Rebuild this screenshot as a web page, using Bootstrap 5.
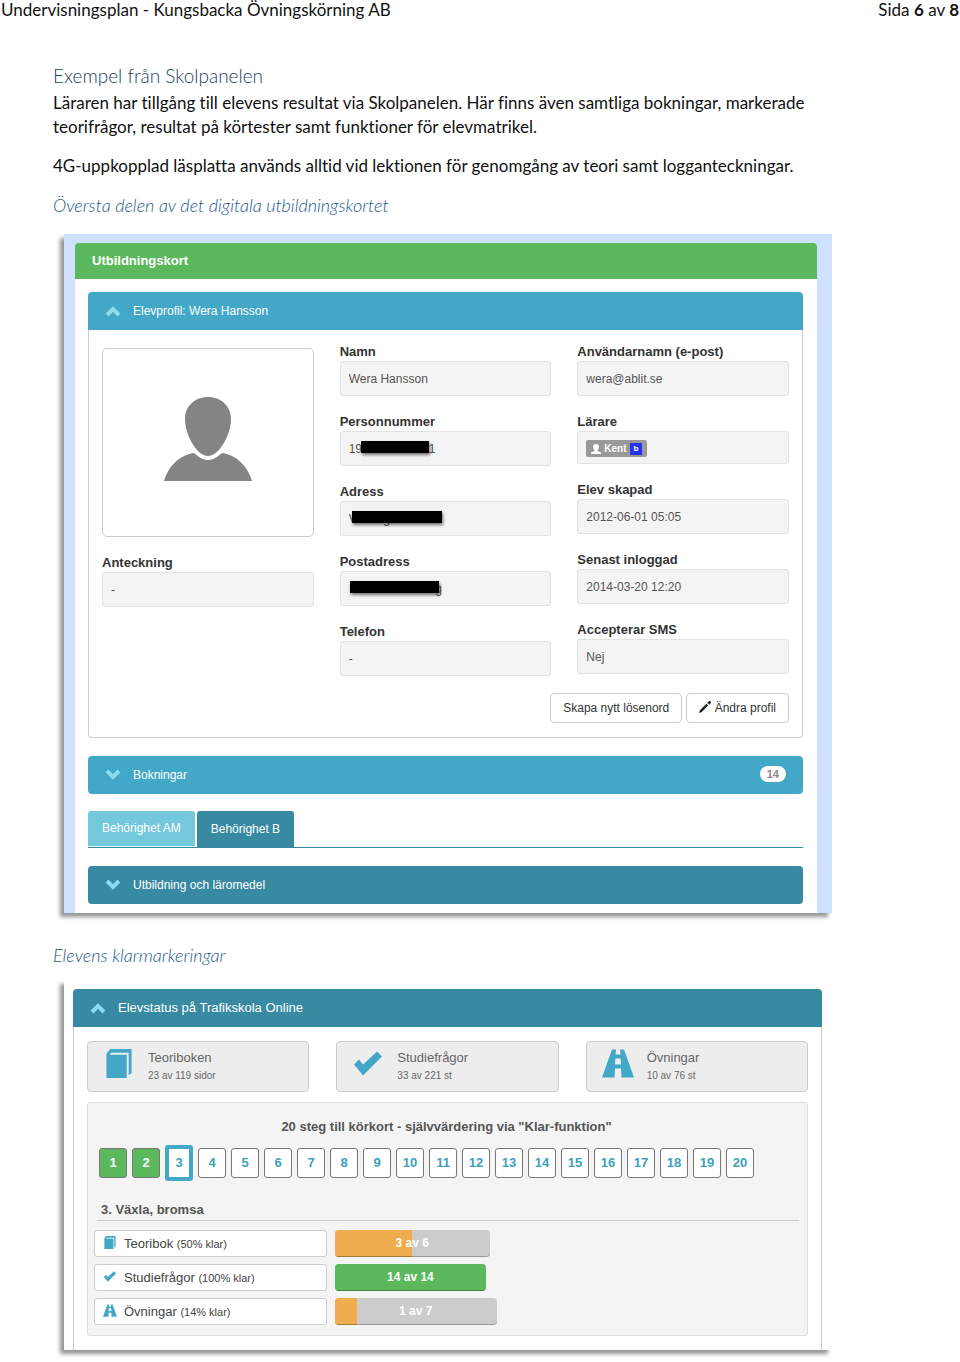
<!DOCTYPE html>
<html lang="sv">
<head>
<meta charset="utf-8">
<meta name="viewport" content="width=device-width, initial-scale=1">
<title>Undervisningsplan - Kungsbacka Övningskörning AB</title>
<link href="https://cdn.jsdelivr.net/npm/bootstrap@5.3.0/dist/css/bootstrap.min.css" rel="stylesheet">
<style>
  :root { --teal: #43a8c8; --petrol: #388aa2; --leaf: #5cb85c; --amber: #f0ad4e; --hint: #8adcf0; }
  body { font-family: Lato, sans-serif; font-size: 17px; line-height: 24px; font-variant-ligatures: none; color: #111; background: #fff; }
  .page-head { line-height: 20px; padding: 0 1px; }
  .page-body { padding: 44px 128px 12px 53px; }
  .doc-title { font-size: 19px; line-height: 24px; font-weight: 300; color: #24415f; margin-bottom: 3px; }
  .doc-text { margin-bottom: 15px; margin-right: -20px; }
  .doc-caption { font-style: italic; font-size: 18px; line-height: 24px; font-weight: 300; color: #245a8c; margin: 0; }
  .shot { margin: 17px 0 0 11px; font-family: "Liberation Sans", Arial, sans-serif; font-size: 12px; line-height: 18px; color: #555; box-shadow: -4px 4px 4px rgba(0,0,0,.42); background: #fff; }
  .shot + .doc-caption { margin-top: 30px; }
  .shot-blue { background: #cfe1ff; padding: 9px 15px 0 11px; }
  .shot-status { margin-top: 13px; padding: 9px 10px 0 9px; }
  .card-title-bar { background: var(--leaf); color: #fff; font-size: 13px; font-weight: 700; line-height: 18px; padding: 9px 17px; border-radius: 4px 4px 0 0; margin: 0; }
  .sheet { background: #fff; padding: 13px 14px 9px 13px; }
  .bar-btn { display: flex; align-items: center; width: 100%; border: 0; border-radius: 4px; background: var(--teal); color: #fff; line-height: 18px; padding: 10px 17px; text-align: left; }
  .bar-btn svg { width: 16px; height: 12px; fill: none; stroke: var(--hint); stroke-width: 4; margin-right: 12px; }
  .bar-btn.dark { background: var(--petrol); }
  .bar-btn.open { border-radius: 4px 4px 0 0; }
  .shot-status .bar-btn { font-size: 13px; }
  .count { background: #fff; color: #888; font-size: 11px; font-weight: 700; line-height: 16px; border-radius: 8px; padding: 0 7px; margin-bottom: 2px; }
  .profile { border: 1px solid #ccc; border-top: 0; border-radius: 0 0 4px 4px; padding: 13px 13px 14px; margin-bottom: 18px; }
  .profile .row { --bs-gutter-x: 26px; }
  .avatar { border: 1px solid #ccc; border-radius: 5px; height: 189px; margin: 5px 0 17px; }
  .avatar svg { width: 88px; height: 84px; margin-bottom: 8px; fill: #848484; }
  .field { margin-bottom: 17px; position: relative; }
  .field label, .field .lbl { display: block; font-size: 13px; font-weight: 700; line-height: 18px; color: #333; }
  .field .form-control { height: 35px; font-size: 12px; line-height: 18px; padding: 7px 8px; border: 1px solid #e3e3e3; border-radius: 3px; background: #f4f4f4; color: #555; white-space: pre; box-shadow: none; }
  .field .short { height: 33px; }
  .hide-bar { position: absolute; background: #000; height: 12px; top: 28px; box-shadow: 1px 2px 3px rgba(0,0,0,.55); }
  .teacher { display: inline-flex; align-items: center; gap: 3px; background: #999; color: #fff; font-size: 10px; font-weight: 700; line-height: 17px; border-radius: 2px; padding: 0 5px; margin-top: 1px; }
  .teacher svg { width: 10px; height: 10px; fill: #fff; }
  .teacher b { background: #2632ee; font-size: 8px; line-height: 12px; padding: 0 4px; }
  .tool { background: #fff; border: 1px solid #ccc; border-radius: 4px; color: #333; font-size: 12px; line-height: 18px; padding: 5px 12px; white-space: nowrap; }
  .tool svg { width: 12px; height: 12px; fill: #222; vertical-align: -1px; }
  .cls-tabs { border-bottom: 1px solid var(--petrol); gap: 2px; margin: 17px 0 18px; }
  .cls-tabs button { border: 0; border-radius: 3px 3px 0 0; color: #fff; background: #74c8dc; line-height: 18px; padding: 8px 14px 9px; margin-bottom: 1px; }
  .cls-tabs .active { background: var(--petrol); margin-bottom: 0; padding: 9px 14px; }
  .status { border: 1px solid #ccc; border-top: 0; border-bottom: 0; padding: 14px 13px; }
  .tiles { gap: 27px; margin-bottom: 10px; }
  .tile { flex: 1 1 0; height: 51px; border: 1px solid #ccc; border-radius: 4px; background: #ededed; padding: 7px 15px; display: flex; gap: 13px; color: #666; }
  .tile svg { width: 32px; height: 29px; flex: none; }
  .tile strong { display: block; font-size: 13px; font-weight: 400; line-height: 18px; }
  .tile span { display: block; font-size: 10px; line-height: 18px; }
  .ico { fill: #43a8c8; }
  .well-box { background: #f4f4f4; border: 1px solid #ddd; border-radius: 3px; padding: 14px 8px 10px 6px; }
  .well-title { font-size: 13px; font-weight: 700; line-height: 20px; text-align: center; color: #555; margin: 0 0 11px; }
  .steps { gap: 5px; padding-left: 5px; }
  .steps button { width: 28px; height: 30px; border: 1px solid #777; border-radius: 3px; background: #fff; color: #3e9fbd; font-size: 13px; font-weight: 700; line-height: 18px; padding: 0; }
  .steps .done { background: var(--leaf); color: #fff; }
  .steps .now { border: 4px solid var(--teal); height: 36px; margin: -3px 0; }
  .part-title { font-size: 13px; font-weight: 700; line-height: 18px; color: #555; border-bottom: 1px solid #ccc; padding: 0 4px 1px; margin: 23px 0 9px 3px; }
  .task { gap: 8px; margin-bottom: 7px; }
  .task:last-child { margin-bottom: 0; }
  .task a { width: 33%; height: 27px; border: 1px solid #ccc; border-radius: 3px; background: #fff; color: #444; font-size: 13px; line-height: 18px; padding: 4px 8px; text-decoration: none; white-space: nowrap; }
  .task a span { font-size: 11px; }
  .task svg { width: 14px; height: 13px; margin-right: 7px; vertical-align: -1px; }
  .task .progress { position: relative; height: 27px; border-radius: 4px; background: #ccc; box-shadow: inset 0 -1px 0 rgba(0,0,0,.25); --bs-progress-bar-bg: var(--amber); }
  .task .progress-bar { box-shadow: inset 0 -1px 0 rgba(0,0,0,.3); }
  .task .full { background: var(--leaf); }
  .task .progress b { position: absolute; inset: 0; text-align: center; color: #fff; font-size: 12px; line-height: 27px; }
</style>
</head>
<body>
<svg class="d-none" xmlns="http://www.w3.org/2000/svg">
  <symbol id="i-up" viewBox="0 0 16 12"><path d="M2 10 8 4 14 10"/></symbol>
  <symbol id="i-down" viewBox="0 0 16 12"><path d="M2 2 8 8 14 2"/></symbol>
  <symbol id="i-user" viewBox="0 0 88 84"><path d="M44 0C57 0 67 9 67 22C67 38 55 59 44 59C33 59 21 38 21 22C21 9 31 0 44 0ZM29 56C33 57 36 63 44 63C52 63 55 57 59 56C74 59 84 70 88 84H0C4 70 14 59 29 56Z"/></symbol>
  <symbol id="i-person" viewBox="0 0 10 10"><path d="M5 0C7 0 8 1 8 3C8 5 7 5 6.500 6.500V7L10 8.500V10H0V8.500L3.500 7V6.500C3 5 2 5 2 3C2 1 3 0 5 0Z"/></symbol>
  <symbol id="i-book" viewBox="0 0 28 30"><path d="M1 5 5 0H27V25L24 27V4H6L4 6H22V30H1Z"/></symbol>
  <symbol id="i-check" viewBox="-2 -2 32 28"><path d="M0 13 5 8 9 13 23 0 28 5 9 24Z"/></symbol>
  <symbol id="i-road" viewBox="0 0 32 28"><path d="M10 0H14L13.500 5H18.500L18 0H22L32 28H19.500L19 19H13L12.500 28H0ZM13.300 9 13 15H19L18.700 9Z" fill-rule="evenodd"/></symbol>
  <symbol id="i-pen" viewBox="0 0 13 13"><path d="M0 13 1 10 8 3 10 5 3 12ZM9 2 11 0H12L13 1V2L11 4Z"/></symbol>
</svg>

<header class="page-head d-flex justify-content-between">
  <span>Undervisningsplan - Kungsbacka Övningskörning AB</span>
  <span>Sida <b>6</b> av <b>8</b></span>
</header>

<main class="page-body">
  <h1 class="doc-title">Exempel från Skolpanelen</h1>
  <p class="doc-text">Läraren har tillgång till elevens resultat via Skolpanelen. Här finns även samtliga bokningar, markerade<br>teorifrågor, resultat på körtester samt funktioner för elevmatrikel.</p>
  <p class="doc-text">4G-uppkopplad läsplatta används alltid vid lektionen för genomgång av teori samt logganteckningar.</p>
  <h2 class="doc-caption">Översta delen av det digitala utbildningskortet</h2>

  <section class="shot shot-blue">
    <h3 class="card-title-bar">Utbildningskort</h3>
    <div class="sheet">
      <button type="button" class="bar-btn open"><svg><use href="#i-up"/></svg>Elevprofil: Wera Hansson</button>
      <div class="profile">
        <div class="row">
          <div class="col-4">
            <div class="avatar d-flex align-items-center justify-content-center"><svg><use href="#i-user"/></svg></div>
            <div class="field"><label for="f-note">Anteckning</label><input id="f-note" class="form-control" value="-" readonly></div>
          </div>
          <div class="col-4">
            <div class="field"><label for="f-name">Namn</label><input id="f-name" class="form-control" value="Wera Hansson" readonly></div>
            <div class="field"><label for="f-pnr">Personnummer</label><input id="f-pnr" class="form-control" value="19                    1" readonly><i class="hide-bar" style="left:21px;width:68px"></i></div>
            <div class="field"><label for="f-adr">Adress</label><input id="f-adr" class="form-control" value="V        g" readonly><i class="hide-bar" style="left:12px;width:90px"></i></div>
            <div class="field"><label for="f-post">Postadress</label><input id="f-post" class="form-control" value="                          g" readonly><i class="hide-bar" style="left:10px;width:89px"></i></div>
            <div class="field"><label for="f-tel">Telefon</label><input id="f-tel" class="form-control" value="-" readonly></div>
          </div>
          <div class="col-4">
            <div class="field"><label for="f-mail">Användarnamn (e-post)</label><input id="f-mail" class="form-control" value="wera@ablit.se" readonly></div>
            <div class="field"><span class="lbl">Lärare</span><div class="form-control short"><span class="teacher"><svg><use href="#i-person"/></svg>Kent<b>b</b></span></div></div>
            <div class="field"><label for="f-made">Elev skapad</label><input id="f-made" class="form-control" value="2012-06-01 05:05" readonly></div>
            <div class="field"><label for="f-last">Senast inloggad</label><input id="f-last" class="form-control" value="2014-03-20 12:20" readonly></div>
            <div class="field"><label for="f-sms">Accepterar SMS</label><input id="f-sms" class="form-control" value="Nej" readonly></div>
          </div>
        </div>
        <div class="d-flex justify-content-end gap-1">
          <button type="button" class="tool">Skapa nytt lösenord</button>
          <button type="button" class="tool"><svg><use href="#i-pen"/></svg> Ändra profil</button>
        </div>
      </div>
      <button type="button" class="bar-btn"><svg><use href="#i-down"/></svg>Bokningar<span class="count ms-auto">14</span></button>
      <div class="cls-tabs d-flex">
        <button type="button">Behörighet AM</button>
        <button type="button" class="active">Behörighet B</button>
      </div>
      <button type="button" class="bar-btn dark"><svg><use href="#i-down"/></svg>Utbildning och läromedel</button>
    </div>
  </section>

  <h2 class="doc-caption">Elevens klarmarkeringar</h2>

  <section class="shot shot-status">
    <button type="button" class="bar-btn dark open"><svg><use href="#i-up"/></svg>Elevstatus på Trafikskola Online</button>
    <div class="status">
      <div class="tiles d-flex">
        <div class="tile"><svg class="ico"><use href="#i-book"/></svg><div><strong>Teoriboken</strong><span>23 av 119 sidor</span></div></div>
        <div class="tile"><svg class="ico"><use href="#i-check"/></svg><div><strong>Studiefrågor</strong><span>33 av 221 st</span></div></div>
        <div class="tile"><svg class="ico"><use href="#i-road"/></svg><div><strong>Övningar</strong><span>10 av 76 st</span></div></div>
      </div>
      <div class="well-box">
        <h3 class="well-title">20 steg till körkort - självvärdering via "Klar-funktion"</h3>
        <div class="steps d-flex">
          <button type="button" class="done">1</button><button type="button" class="done">2</button><button type="button" class="now">3</button><button type="button">4</button><button type="button">5</button><button type="button">6</button><button type="button">7</button><button type="button">8</button><button type="button">9</button><button type="button">10</button><button type="button">11</button><button type="button">12</button><button type="button">13</button><button type="button">14</button><button type="button">15</button><button type="button">16</button><button type="button">17</button><button type="button">18</button><button type="button">19</button><button type="button">20</button>
        </div>
        <h4 class="part-title">3. Växla, bromsa</h4>
        <div class="task d-flex"><a href="#"><svg class="ico"><use href="#i-book"/></svg>Teoribok <span>(50% klar)</span></a><div class="progress" style="width:22%"><div class="progress-bar" style="width:50%"></div><b>3 av 6</b></div></div>
        <div class="task d-flex"><a href="#"><svg class="ico"><use href="#i-check"/></svg>Studiefrågor <span>(100% klar)</span></a><div class="progress" style="width:21.5%"><div class="progress-bar full" style="width:100%"></div><b>14 av 14</b></div></div>
        <div class="task d-flex"><a href="#"><svg class="ico"><use href="#i-road"/></svg>Övningar <span>(14% klar)</span></a><div class="progress" style="width:23%"><div class="progress-bar" style="width:14%"></div><b>1 av 7</b></div></div>
      </div>
    </div>
  </section>
</main>
<script src="https://cdn.jsdelivr.net/npm/bootstrap@5.3.0/dist/js/bootstrap.bundle.min.js"></script>
</body>
</html>
